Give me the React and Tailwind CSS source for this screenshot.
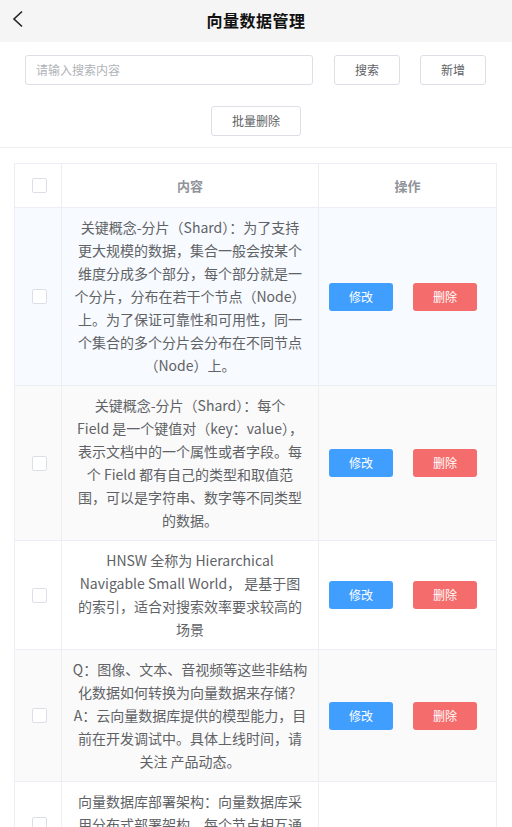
const rows = [
  {
    bg: "bg-[#f7fafe]",
    lines: [
      "关键概念-分片（Shard）：为了支持",
      "更大规模的数据，集合一般会按某个",
      "维度分成多个部分，每个部分就是一",
      "个分片，分布在若干个节点（Node）",
      "上。为了保证可靠性和可用性，同一",
      "个集合的多个分片会分布在不同节点",
      "（Node）上。",
    ],
  },
  {
    bg: "bg-[#fafafa]",
    lines: [
      "关键概念-分片（Shard）：每个",
      "Field 是一个键值对（key：value），",
      "表示文档中的一个属性或者字段。每",
      "个 Field 都有自己的类型和取值范",
      "围，可以是字符串、数字等不同类型",
      "的数据。",
    ],
  },
  {
    bg: "bg-white",
    lines: [
      "HNSW 全称为 Hierarchical",
      "Navigable Small World， 是基于图",
      "的索引，适合对搜索效率要求较高的",
      "场景",
    ],
  },
  {
    bg: "bg-[#fafafa]",
    lines: [
      "Q：图像、文本、音视频等这些非结构",
      "化数据如何转换为向量数据来存储？",
      "A：云向量数据库提供的模型能力，目",
      "前在开发调试中。具体上线时间，请",
      "关注 产品动态。",
    ],
  },
  {
    bg: "bg-white",
    lines: [
      "向量数据库部署架构：向量数据库采",
      "用分布式部署架构，每个节点相互通",
      "信和协调，实现数据存储和检索。",
    ],
  },
];

function Checkbox() {
  return <span className="block w-[15px] h-[15px] border border-[#dcdfe6] rounded-[2px] bg-white" />;
}

export default function App() {
  return (
    <div className="w-[512px] h-[827px] overflow-hidden bg-white text-[#606266]" style={{ fontFamily: '"Noto Sans CJK SC", "Noto Sans", sans-serif' }}>
      <div className="relative h-[42px] bg-[#f5f5f5] flex items-center justify-center pb-[3px]">
        <svg className="absolute left-[11px] top-[10px]" width="14" height="18" viewBox="0 0 14 18" fill="none">
          <path d="M11 1.5 L3 9 L11 16.5" stroke="#222" strokeWidth="1.6" strokeLinejoin="miter" />
        </svg>
        <h1 className="text-[16px] font-bold text-[#111] tracking-[0.5px]">向量数据管理</h1>
      </div>

      <div className="flex items-center pl-[25px] pr-[26px] pt-[13px]">
        <div className="flex-1 h-[30px] border border-[#dcdfe6] rounded-[3px] flex items-center px-[10px] text-[12px] text-[#b0b3b8]">
          请输入搜索内容
        </div>
        <button className="ml-[21px] w-[66px] h-[30px] border border-[#dcdfe6] rounded-[3px] text-[12px] text-[#606266] bg-white">搜索</button>
        <button className="ml-[20px] w-[66px] h-[30px] border border-[#dcdfe6] rounded-[3px] text-[12px] text-[#606266] bg-white">新增</button>
      </div>

      <div className="flex justify-center pt-[21px] pb-[11px] border-b border-[#efefef]">
        <button className="w-[90px] h-[30px] border border-[#dcdfe6] rounded-[3px] text-[12px] text-[#606266] bg-white">批量删除</button>
      </div>

      <div className="ml-[14px] mt-[15px] w-[483px] border-l border-r border-t border-[#ebeef5]">
        <div className="flex h-[44px] border-b border-[#ebeef5] text-[13px] font-bold text-[#909399]">
          <div className="w-[47px] flex items-center justify-center border-r border-[#ebeef5] pl-[3px]">
            <Checkbox />
          </div>
          <div className="w-[257px] flex items-center justify-center border-r border-[#ebeef5]">内容</div>
          <div className="flex-1 flex items-center justify-center">操作</div>
        </div>
        {rows.map((row, i) => (
          <div key={i} className={`flex border-b border-[#ebeef5] ${row.bg}`}>
            <div className="w-[47px] flex items-center justify-center border-r border-[#ebeef5] pl-[3px]">
              <Checkbox />
            </div>
            <div className="w-[257px] border-r border-[#ebeef5] py-[8px] text-[14px] leading-[23px] text-center">
              {row.lines.map((l, j) => (
                <div key={j} className="whitespace-nowrap">{l}</div>
              ))}
            </div>
            <div className="flex-1 flex items-center gap-[20px] pl-[10px]">
              {i < 4 && (
                <>
                  <button className="w-[64px] h-[28px] rounded-[3px] bg-[#409eff] text-white text-[12px]">修改</button>
                  <button className="w-[64px] h-[28px] rounded-[3px] bg-[#f56c6c] text-white text-[12px]">删除</button>
                </>
              )}
            </div>
          </div>
        ))}
      </div>
    </div>
  );
}
